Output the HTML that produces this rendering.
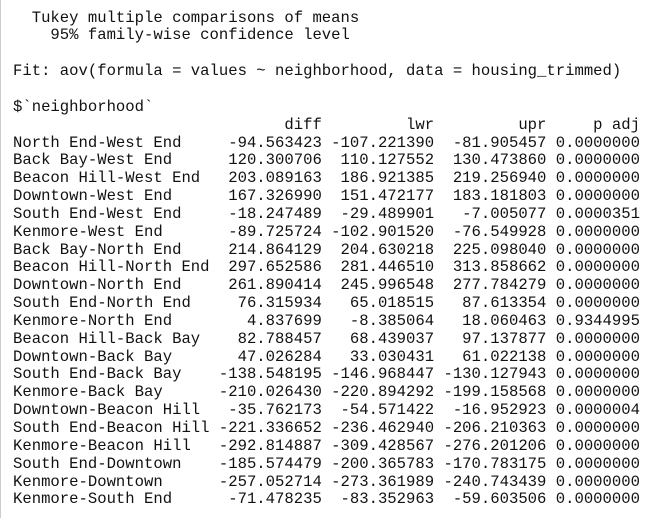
<!DOCTYPE html>
<html><head><meta charset="utf-8"><style>
html,body{margin:0;padding:0;background:#fff;width:660px;height:518px;overflow:hidden}
pre{margin:0;position:absolute;left:13px;top:9.6px;font-family:"Liberation Mono",monospace;font-size:15.6px;line-height:17.85px;color:#111;}
.edge{position:absolute;left:0;top:0;width:1px;height:518px;background:#ccc}
</style></head><body><div class="edge"></div><pre>  Tukey multiple comparisons of means
    95% family-wise confidence level

Fit: aov(formula = values ~ neighborhood, data = housing_trimmed)

$`neighborhood`
                             diff         lwr         upr     p adj
North End-West End     -94.563423 -107.221390  -81.905457 0.0000000
Back Bay-West End      120.300706  110.127552  130.473860 0.0000000
Beacon Hill-West End   203.089163  186.921385  219.256940 0.0000000
Downtown-West End      167.326990  151.472177  183.181803 0.0000000
South End-West End     -18.247489  -29.489901   -7.005077 0.0000351
Kenmore-West End       -89.725724 -102.901520  -76.549928 0.0000000
Back Bay-North End     214.864129  204.630218  225.098040 0.0000000
Beacon Hill-North End  297.652586  281.446510  313.858662 0.0000000
Downtown-North End     261.890414  245.996548  277.784279 0.0000000
South End-North End     76.315934   65.018515   87.613354 0.0000000
Kenmore-North End        4.837699   -8.385064   18.060463 0.9344995
Beacon Hill-Back Bay    82.788457   68.439037   97.137877 0.0000000
Downtown-Back Bay       47.026284   33.030431   61.022138 0.0000000
South End-Back Bay    -138.548195 -146.968447 -130.127943 0.0000000
Kenmore-Back Bay      -210.026430 -220.894292 -199.158568 0.0000000
Downtown-Beacon Hill   -35.762173  -54.571422  -16.952923 0.0000004
South End-Beacon Hill -221.336652 -236.462940 -206.210363 0.0000000
Kenmore-Beacon Hill   -292.814887 -309.428567 -276.201206 0.0000000
South End-Downtown    -185.574479 -200.365783 -170.783175 0.0000000
Kenmore-Downtown      -257.052714 -273.361989 -240.743439 0.0000000
Kenmore-South End      -71.478235  -83.352963  -59.603506 0.0000000</pre></body></html>
